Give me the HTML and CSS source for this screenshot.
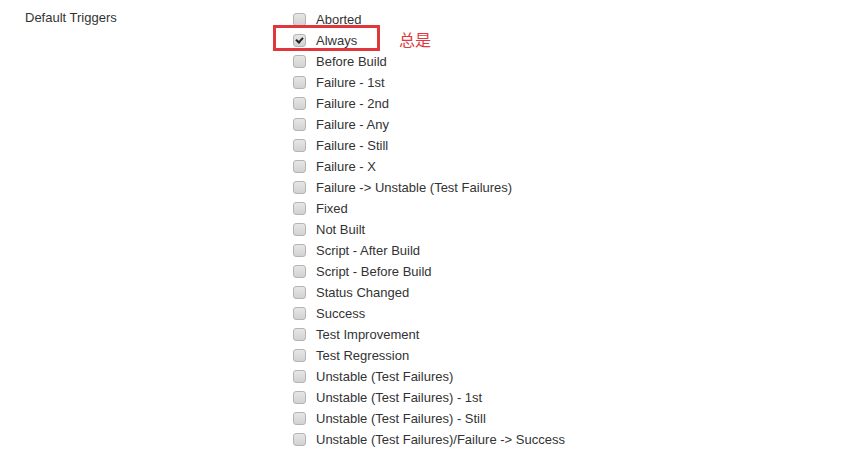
FILE: index.html
```html
<!DOCTYPE html>
<html lang="zh">
<head>
    <meta charset="UTF-8">
    <title>Default Triggers</title>
    <link rel="stylesheet" href="styles.css">
</head>
<body>
    <div class="setting">
        <div class="setting-name">Default Triggers</div>
        <div class="setting-main">
            <label class="trigger"><span class="box"></span>Aborted</label>
            <label class="trigger"><span class="box checked"></span>Always</label>
            <label class="trigger"><span class="box"></span>Before Build</label>
            <label class="trigger"><span class="box"></span>Failure - 1st</label>
            <label class="trigger"><span class="box"></span>Failure - 2nd</label>
            <label class="trigger"><span class="box"></span>Failure - Any</label>
            <label class="trigger"><span class="box"></span>Failure - Still</label>
            <label class="trigger"><span class="box"></span>Failure - X</label>
            <label class="trigger"><span class="box"></span>Failure -&gt; Unstable (Test Failures)</label>
            <label class="trigger"><span class="box"></span>Fixed</label>
            <label class="trigger"><span class="box"></span>Not Built</label>
            <label class="trigger"><span class="box"></span>Script - After Build</label>
            <label class="trigger"><span class="box"></span>Script - Before Build</label>
            <label class="trigger"><span class="box"></span>Status Changed</label>
            <label class="trigger"><span class="box"></span>Success</label>
            <label class="trigger"><span class="box"></span>Test Improvement</label>
            <label class="trigger"><span class="box"></span>Test Regression</label>
            <label class="trigger"><span class="box"></span>Unstable (Test Failures)</label>
            <label class="trigger"><span class="box"></span>Unstable (Test Failures) - 1st</label>
            <label class="trigger"><span class="box"></span>Unstable (Test Failures) - Still</label>
            <label class="trigger"><span class="box"></span>Unstable (Test Failures)/Failure -&gt; Success</label>

            <div class="mark"></div>
            <div class="note">总是</div>
        </div>
    </div>
</body>
</html>
```

FILE: styles.css
```css
body {
    margin: 0;
    background: #fff;
    font-family: 'Liberation Sans', Arial, 'Noto Sans CJK SC', sans-serif;
    font-size: 13px;
    color: #333;
}
.setting {
    display: flex;
}
.setting-name {
    width: 293px;
    padding: 10px 0 0 25px;
    box-sizing: border-box;
    line-height: 15px;
}
.setting-main {
    position: relative;
    padding-top: 9px;
}
.trigger {
    display: flex;
    align-items: center;
    height: 21px;
}
.box {
    width: 11px;
    height: 11px;
    margin-right: 10px;
    border: 1px solid #b4b4b4;
    border-radius: 3px;
    background: linear-gradient(#e6e6e6, #d2d2d2);
    display: flex;
    align-items: center;
    justify-content: center;
}
.box.checked::after {
    content: '';
    width: 5px;
    height: 3px;
    margin-top: -2px;
    border-left: 2px solid #222;
    border-bottom: 2px solid #222;
    transform: rotate(-48deg);
}
.mark {
    position: absolute;
    left: -20px;
    top: 25px;
    width: 101px;
    height: 20px;
    border: 3px solid #e0363c;
}
.note {
    position: absolute;
    left: 106px;
    top: 31px;
    font-size: 16px;
    color: #e03a40;
    font-family: 'Noto Sans CJK SC', sans-serif;
    line-height: 16px;
}
```
